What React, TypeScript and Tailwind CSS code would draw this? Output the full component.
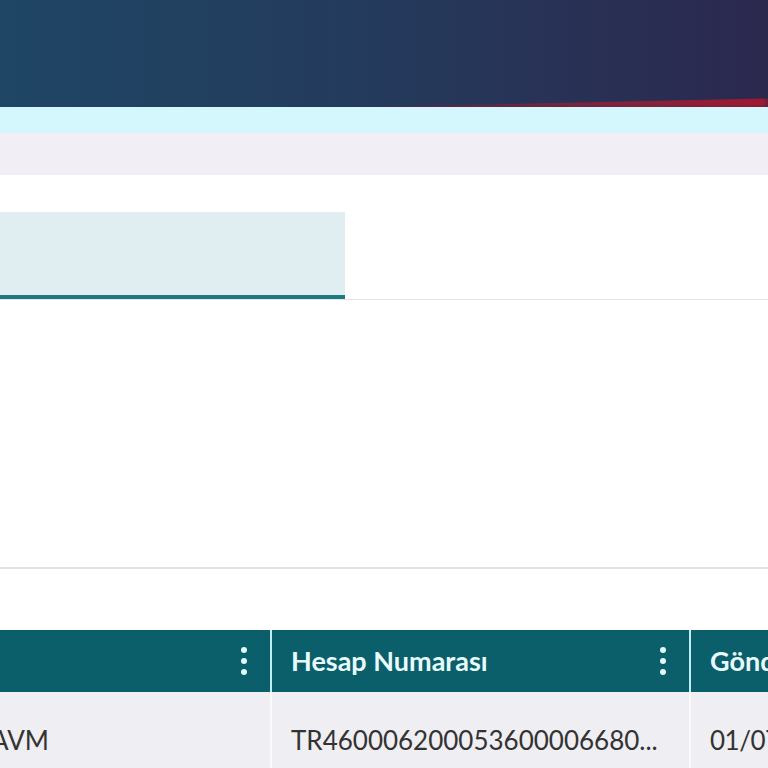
import React from 'react';

type Column = {
  title: string;
  width: string;
  menu: boolean;
};

const columns: Column[] = [
  { title: '', width: 'w-[272px]', menu: true },
  { title: 'Hesap Numarası', width: 'w-[419px]', menu: true },
  { title: 'Gönderim Tarihi', width: 'flex-1', menu: false },
];

const row = ['AVM', 'TR460006200053600006680...', '01/07/2024'];

const Kebab = () => (
  <span className="flex flex-col items-center gap-[5px]">
    <span className="w-[6px] h-[6px] rounded-full bg-[#dff8fb]" />
    <span className="w-[6px] h-[6px] rounded-full bg-[#dff8fb]" />
    <span className="w-[6px] h-[6px] rounded-full bg-[#dff8fb]" />
  </span>
);

export default function App() {
  return (
    <div className="w-[768px] h-[768px] overflow-hidden bg-white font-['Lato','Liberation_Sans',sans-serif]">
      {/* Top banner */}
      <div className="relative h-[107px] overflow-hidden bg-gradient-to-r from-[#1f4665] via-[#243a5c] to-[#2b284e]">
        <div className="absolute -bottom-[2px] left-0 right-0 h-[14px] bg-gradient-to-r from-transparent via-[#5a2344] to-[#a3192f] [clip-path:polygon(35%_100%,100%_25%,100%_100%)] blur-[3px]" />
      </div>

      {/* Notice strip */}
      <div className="h-[26px] bg-[#d3f7fc]" />

      {/* Breadcrumb band */}
      <div className="h-[42px] bg-[#f1eff5]" />

      {/* Tabs */}
      <div className="pt-[37px] flex items-end border-b border-[#e3e3e3]">
        <div className="w-[345px] h-[87px] bg-[#e0eef2] border-b-4 border-[#1d7a80]" />
      </div>

      {/* Filter area */}
      <div className="h-[269px] border-b-2 border-[#e2e2e2]" />

      <div className="h-[61px]" />

      {/* Table */}
      <div className="flex flex-col">
        <div className="flex h-[62px] bg-[#0a5f6b]">
          {columns.map((col, i) => (
            <div
              key={i}
              className={`${col.width} shrink-0 flex items-center justify-between pl-[19px] pr-[23px] ${
                i < columns.length - 1 ? 'border-r-2 border-[#bdeff3]' : ''
              }`}
            >
              <span className="text-[27px] font-bold text-[#e8fbfd] whitespace-nowrap">
                {col.title}
              </span>
              {col.menu && <Kebab />}
            </div>
          ))}
        </div>
        <div className="flex h-[96px] bg-[#efeef2]">
          {columns.map((col, i) => (
            <div
              key={i}
              className={`${col.width} shrink-0 flex items-center ${
                i === 0 ? 'pl-0' : 'pl-[19px]'
              } ${i < columns.length - 1 ? 'border-r-2 border-[#fafafa]' : ''}`}
            >
              <span
                className={`text-[26px] text-[#333333] whitespace-nowrap ${
                  i === 0 ? '-ml-[9px]' : ''
                } ${i === 2 ? 'tracking-[-0.5px]' : ''}`}
              >
                {row[i]}
              </span>
            </div>
          ))}
        </div>
      </div>
    </div>
  );
}
